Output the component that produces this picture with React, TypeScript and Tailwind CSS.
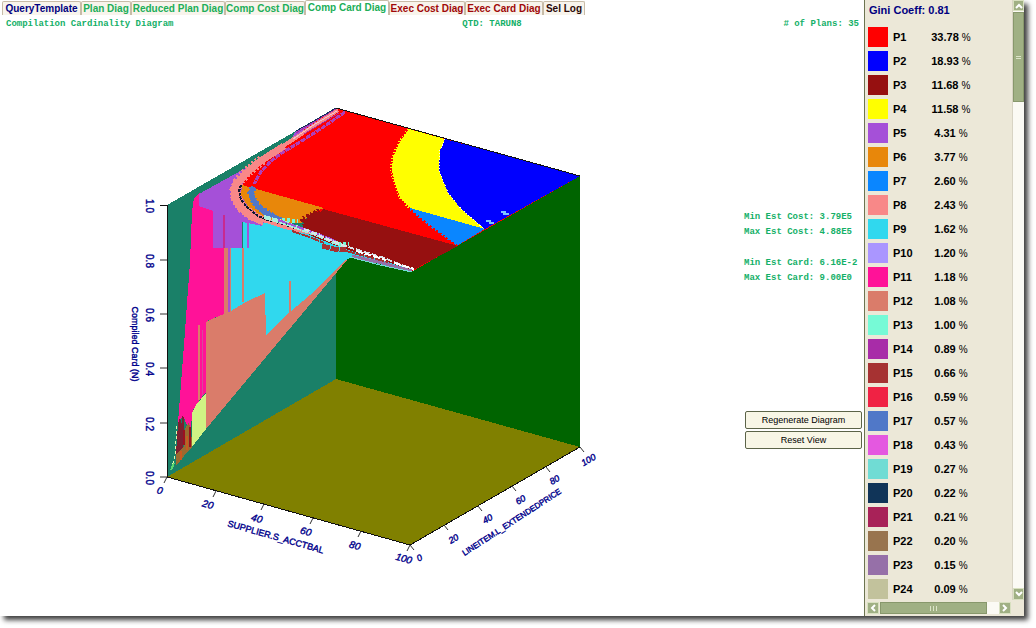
import { ReactNode } from "react";

type Plan = { name: string, value: string, color: string }
type Label = { text: string, x: number, y: number }

const tabs = [
    { title: 'QueryTemplate', style: 'w-[79px] text-[#000080]' },
    { title: 'Plan Diag', style: 'w-[50px] text-[#20ae58]' },
    { title: 'Reduced Plan Diag', style: 'w-[94px] text-[#20ae58]' },
    { title: 'Comp Cost Diag', style: 'w-[80px] text-[#20ae58]' },
    { title: 'Comp Card Diag', style: 'w-[84px] text-[#20ae58]', active: true },
    { title: 'Exec Cost Diag', style: 'w-[76px] text-[#a00808]' },
    { title: 'Exec Card Diag', style: 'w-[78px] text-[#a00808]' },
    { title: 'Sel Log', style: 'w-[42px] text-[#2a0808]' },
]

const plans: Plan[] = [
    { name: 'P1', value: '33.78', color: 'bg-[#ff0000]' },
    { name: 'P2', value: '18.93', color: 'bg-[#0000ff]' },
    { name: 'P3', value: '11.68', color: 'bg-[#961010]' },
    { name: 'P4', value: '11.58', color: 'bg-[#ffff00]' },
    { name: 'P5', value: '4.31', color: 'bg-[#a550d8]' },
    { name: 'P6', value: '3.77', color: 'bg-[#e8870a]' },
    { name: 'P7', value: '2.60', color: 'bg-[#0a86ff]' },
    { name: 'P8', value: '2.43', color: 'bg-[#f88888]' },
    { name: 'P9', value: '1.62', color: 'bg-[#30d8ee]' },
    { name: 'P10', value: '1.20', color: 'bg-[#aa96ff]' },
    { name: 'P11', value: '1.18', color: 'bg-[#ff1298]' },
    { name: 'P12', value: '1.08', color: 'bg-[#da7c6a]' },
    { name: 'P13', value: '1.00', color: 'bg-[#76fad6]' },
    { name: 'P14', value: '0.89', color: 'bg-[#a82ca8]' },
    { name: 'P15', value: '0.66', color: 'bg-[#a63232]' },
    { name: 'P16', value: '0.59', color: 'bg-[#f02244]' },
    { name: 'P17', value: '0.57', color: 'bg-[#5078c8]' },
    { name: 'P18', value: '0.43', color: 'bg-[#e458e0]' },
    { name: 'P19', value: '0.27', color: 'bg-[#70dcd4]' },
    { name: 'P20', value: '0.22', color: 'bg-[#103458]' },
    { name: 'P21', value: '0.21', color: 'bg-[#a82258]' },
    { name: 'P22', value: '0.20', color: 'bg-[#98744e]' },
    { name: 'P23', value: '0.15', color: 'bg-[#9670a8]' },
    { name: 'P24', value: '0.09', color: 'bg-[#c2c29c]' },
]

const heightLabels: Label[] = [
    { text: '1.0', x: 150, y: 206 },
    { text: '0.8', x: 150, y: 261 },
    { text: '0.6', x: 150, y: 315 },
    { text: '0.4', x: 150, y: 369 },
    { text: '0.2', x: 150, y: 424 },
    { text: '0.0', x: 150, y: 478 },
]

const supplierLabels: Label[] = [
    { text: '0', x: 160, y: 490 },
    { text: '20', x: 208, y: 504 },
    { text: '40', x: 257, y: 518 },
    { text: '60', x: 306, y: 531 },
    { text: '80', x: 355, y: 545 },
    { text: '100', x: 404, y: 558 },
]

const priceLabels: Label[] = [
    { text: '0', x: 419, y: 557 },
    { text: '20', x: 453, y: 538 },
    { text: '40', x: 487, y: 518 },
    { text: '60', x: 520, y: 499 },
    { text: '80', x: 554, y: 479 },
    { text: '100', x: 588, y: 459 },
]

function AxisLabels({ labels, angle, style }: { labels: Label[], angle: number, style: string }): ReactNode {
    return (
        <g className={style}>
            {labels.map((e) => (
                <text key={e.text} textAnchor="middle" transform={`translate(${e.x} ${e.y}) rotate(${angle})`} y={4}>{e.text}</text>
            ))}
        </g>
    )
}

function Surface(): ReactNode {
    return (
        <g shapeRendering="crispEdges" fill="none">
            {/* steep side of the surface */}
            <path fill="#ff1298" d="M199 193 L194 198 L192 212 L190 262 L184 345 L178 423 L183 416 L190 432 L193 410 L199 401 L206 392 L207 321 L224 314 L228 200 Z" />
            <path fill="#da7c6a" d="M206 322 L212 319 L224 314 L224 248 L244 248 L266 290 L290 310 L352 254 L206 429 Z" />
            <path fill="#30d8ee" d="M231 248 L243 248 L243 220 L262 219 L300 228 L345 246 L413 270 L410 272 L352 257 L344 261 L316 290 L290 312 L266 335 L265 293 L246 302 L231 311 Z" />
            <path fill="#a550d8" d="M336 108 L296 131 L291 139 L260 160 L199 194 L199 206 L213 211 L213 248 L242 248 L242 222 L262 226 L300 140 Z" />
            <path stroke="#a550d8" strokeWidth="2" d="M229 248 V312 M248 220 V248" />
            <path stroke="#da7c6a" strokeWidth="2" d="M243 248 V302 M290 281 V312 M199 325 V400" />
            <path stroke="#c82a90" strokeWidth="2" d="M224 215 V248" />
            <path stroke="#d84a98" strokeWidth="1" d="M202 330 V396" />
            <path fill="#d0f484" d="M192 413 L196 405 L201 399 L206 393 V429 L192 447 Z" />
            <path fill="#7c2030" d="M178 424 L180 418 L182 424 L183 408 L184 426 L183 449 L176 454 Z" />
            <path fill="#9a6a30" d="M176 454 L184 447 L184 431 L189 422 L192 440 V447 L184 456 L176 466 Z" />
            <path stroke="#9c1020" strokeWidth="2" d="M190 427 V447 M184 430 V445" />
            <path stroke="#c85a20" strokeWidth="2" d="M181 451 V460 M187 436 V450" />
            <path stroke="#e8f8b0" strokeDasharray="3 2" d="M177 426 L175 456 L171 470" />
            <path stroke="#5ad870" strokeWidth="2" d="M174 463 L171 470" />

            {/* plateau */}
            <path fill="#ff0000" d="M336 108 L580 176 L413 271 L242 186 L250 171 L270 153 Z" />
            <path fill="#0000ff" d="M445 139 L580 176 L485 229 L462 210 L448 193 L439 170 L440 150 Z" />
            <path fill="#ffff00" d="M409 129 L445 139 L440 150 L439 170 L448 193 L462 210 L485 229 L410 208 L400 197 L395 183 L392 170 L393 157 L400 142 Z" />
            <path stroke="#ffff00" strokeWidth="2" strokeDasharray="1 2" d="M408 129 L399 142 L392 157 L391 170 L394 183 L399 197 L409 208" />
            <path stroke="#ffffff" strokeDasharray="1 2" d="M445 139 L440 150 L439 170 L448 193 L462 210 L483 228" />
            <path fill="#0a86ff" d="M410 208 L485 229 L458 245 L430 225 Z" />
            <path stroke="#0a86ff" strokeWidth="2" strokeDasharray="2 2" d="M410 209 L430 226 L457 245" />
            <path fill="#e8870a" d="M242 185 L324 208 L310 214 L301 223 L280 223 L262 217 L248 207 L241 195 Z" />
            <path fill="#961010" d="M323 209 L320 212 L313 211 L312 215 L306 214 L307 219 L299 219 L304 224 L301 230 L314 237 L345 249 L413 270 L458 246 Z" />
            <path stroke="#961010" strokeWidth="4" strokeDasharray="2 2" d="M319 210 L302 219 L306 228" />

            {/* bands that follow the hyperbolic edge */}
            <path stroke="#f88888" strokeWidth="9" d="M238 182 L235 190 L236 198 L241 207 L252 216 L264 221" />
            <path stroke="#f88888" strokeWidth="4" d="M338 110 L300 135 L280 148" />
            <path stroke="#f88888" strokeWidth="7" d="M284 146 L262 160 L248 171 L238 183" />
            <path stroke="#f88888" strokeWidth="4" d="M260 219 L285 227 L312 233" />
            <path stroke="#f88888" strokeWidth="11" strokeDasharray="2 2" d="M262 160 L247 172 L238 182 L235 190 L236 198 L241 207 L254 217" />
            <path stroke="#101830" strokeWidth="2" strokeDasharray="3 1" d="M241 185 L239 191 L241 200 L248 208 L258 216 L270 221" />
            <path stroke="#101830" strokeDasharray="2 4" d="M270 221 L300 230" />
            <path stroke="#b040b8" strokeWidth="3" strokeDasharray="5 1" d="M345 112 L322 128 L300 142 L282 153 L270 162 L260 173 L254 184" />
            <path stroke="#5078c8" strokeWidth="5" d="M254 187 L251 192 L252 198 L258 207 L268 214 L281 220" />
            <path stroke="#5078c8" strokeWidth="7" strokeDasharray="2 2" d="M253 188 L251 193 L253 199 L259 208 L274 217" />
            <path stroke="#a82ca8" strokeWidth="1" d="M336 109 L312 123 L296 133 M339 113 L304 134" />
            <path stroke="#f0c0d0" strokeWidth="1" d="M337 111 L312 126 L293 139" />
            <path stroke="#103458" strokeWidth="1" d="M336 108 L312 122 L296 131" />

            {/* noise along the near edge */}
            <path stroke="#a8f0dc" strokeWidth="4" strokeDasharray="7 1" d="M264 217 L282 222 L318 235 L343 246" />
            <path stroke="#76fad6" strokeWidth="4" strokeDasharray="3 2" d="M282 220 L298 221 M338 244 L349 244" />
            <path stroke="#a550d8" strokeWidth="2" strokeDasharray="9 1" d="M278 220 L304 229 L336 241" />
            <path stroke="#dce4ea" strokeWidth="2" strokeDasharray="6 2" d="M304 229 L342 245 L384 258 L414 270" />
            <path stroke="#a63232" strokeWidth="5" strokeDasharray="8 1" d="M322 246 L334 249 L346 250" />
            <path stroke="#a63232" strokeWidth="2" strokeDasharray="9 1" d="M292 231 L312 238 L324 243 M346 251 L388 262" />
            <path stroke="#9670a8" strokeWidth="3" d="M352 256 L382 263 L412 271" />
            <path stroke="#70dcd4" strokeWidth="1" d="M350 257 L380 265 L412 272" />
            <path stroke="#ffffff" strokeWidth="2" strokeDasharray="7 2" d="M356 251 L386 260 M394 263 L414 269" />
            <path stroke="#80c4ff" strokeWidth="2" d="M486 221 H491 M489 223 H494 M501 212 H506 M503 214 H509" />
        </g>
    )
}

function CostDiagram(): ReactNode {
    return (
        <svg viewBox="0 30 740 586" preserveAspectRatio="xMinYMin meet" className="h-full w-full" role="img" aria-label="Compilation Cardinality Diagram">
            <g shapeRendering="crispEdges">
                <path fill="#1a8068" d="M167 205 L336 108 V379 L167 477 Z" />
                <path fill="#006400" d="M336 108 L580 176 V447 L336 379 Z" />
                <path fill="#808000" d="M167 477 L336 379 L580 447 L410 545 Z" />
            </g>
            <Surface />
            <path fill="none" stroke="#101010" shapeRendering="crispEdges" d="M336 108 L580 176 M160 205 H167 V477 L410 545 L580 447" />
            <path fill="none" stroke="#303030" d="M160 260 H167 M160 314 H167 M160 368 H167 M160 423 H167 M160 477 H167 M167 477 L164 483 M216 491 L213 497 M264 504 L261 510 M313 518 L310 524 M361 531 L358 537 M410 545 L407 551 M410 545 L414 550 M444 525 L448 530 M478 506 L482 511 M512 486 L516 491 M546 467 L550 472 M580 447 L584 452" />
            <g className="fill-[#00008b] stroke-[#00008b] font-['Liberation_Sans',Arial,sans-serif]" strokeWidth={0.4}>
                <AxisLabels labels={heightLabels} angle={90} style="text-[10px]" />
                <AxisLabels labels={supplierLabels} angle={16} style="text-[10px] italic" />
                <AxisLabels labels={priceLabels} angle={-30} style="text-[9px] italic" />
                <AxisLabels labels={[{ text: 'Compiled Card (N)', x: 136, y: 344 }]} angle={90} style="text-[9px]" />
                <AxisLabels labels={[{ text: 'SUPPLIER.S_ACCTBAL', x: 276, y: 536 }]} angle={16} style="text-[9px]" />
                <AxisLabels labels={[{ text: 'LINEITEM.L_EXTENDEDPRICE', x: 511, y: 521 }]} angle={-33} style="text-[8px]" />
            </g>
        </svg>
    )
}

function ScrollButton({ name, icon, style }: { name: string, icon: string, style: string }): ReactNode {
    return (
        <button type="button" aria-label={name} className={`flex shrink-0 items-center justify-center border border-[#d8e0c0] bg-[#a0b084] ${style}`}>
            <svg viewBox="0 0 8 8" className="h-2 w-2" fill="none" stroke="#ffffff" strokeWidth="2"><path d={icon} /></svg>
        </button>
    )
}

function Legend(): ReactNode {
    return (
        <aside className="flex w-[160px] shrink-0 flex-col border-l border-[#6c7450] bg-[#ece8d8]">
            <div className="flex min-h-0 flex-1">
                <div className="min-w-0 flex-1 overflow-hidden pl-[3px]">
                    <h2 className="h-[25px] pt-[3px] pl-px text-[11px] leading-[14px] font-bold text-[#000080]">Gini Coeff: 0.81</h2>
                    <table className="w-[124px] table-fixed border-collapse text-[11px] leading-4 font-bold text-black">
                        <tbody>
                            {plans.map((plan) => (
                                <tr key={plan.name} className="h-6">
                                    <td className="w-[25px] p-0"><div className={`h-5 w-5 ${plan.color}`} /></td>
                                    <td className="w-[17px] p-0 whitespace-nowrap">{plan.name}</td>
                                    <td className="p-0 text-center">{plan.value} <span className="text-[10px] font-normal">%</span></td>
                                </tr>
                            ))}
                        </tbody>
                    </table>
                </div>
                <div className="flex w-[12px] shrink-0 flex-col border-l border-[#d8d4c4] bg-[#fbfaf4]">
                    <ScrollButton name="Scroll up" icon="M1 6 L4 3 L7 6" style="h-[11px] w-full" />
                    <div className="mt-px flex h-[90px] flex-col items-center justify-center gap-px border border-[#88986c] bg-[#a0b084]">
                        <span className="h-px w-[5px] bg-[#dce4c8]" />
                        <span className="h-px w-[5px] bg-[#dce4c8]" />
                    </div>
                    <div className="flex-1" />
                    <ScrollButton name="Scroll down" icon="M1 2 L4 5 L7 2" style="h-[12px] w-full" />
                </div>
            </div>
            <div className="flex h-[16px] shrink-0 items-center pr-[13px] pl-[2px]">
                <ScrollButton name="Scroll left" icon="M6 1 L3 4 L6 7" style="h-3 w-3" />
                <div className="ml-px flex h-3 w-[107px] items-center justify-center gap-[2px] border border-[#88986c] bg-[#a0b084]">
                    <span className="h-[5px] w-px bg-[#dce4c8]" />
                    <span className="h-[5px] w-px bg-[#dce4c8]" />
                    <span className="h-[5px] w-px bg-[#dce4c8]" />
                </div>
                <div className="h-3 flex-1 bg-[#fbfaf4]" />
                <ScrollButton name="Scroll right" icon="M2 1 L5 4 L2 7" style="h-3 w-3" />
            </div>
        </aside>
    )
}

export default function App(): ReactNode {
    return (
        <div className="h-screen overflow-hidden bg-white pr-3 pb-3 font-['Liberation_Sans',Arial,sans-serif]">
            <div className="flex h-full bg-white shadow-[4px_4px_5px_0px_#404040]">
                <main className="flex min-w-0 flex-1 flex-col">
                    <nav className="flex h-[15px] shrink-0 items-end pl-[2px]">
                        {tabs.map((tab) => (
                            <button key={tab.title} type="button" className={`shrink-0 rounded-t-xs border-x border-t border-[#c8bca8] text-center text-[10px] font-bold whitespace-nowrap ${tab.active ? 'h-[15px] bg-white leading-[12px]' : 'h-[14px] bg-[#f8f4ec] leading-[14px]'} ${tab.style}`}>{tab.title}</button>
                        ))}
                    </nav>
                    <header className="grid h-[15px] shrink-0 grid-cols-3 items-center pr-[5px] pl-[6px] pt-[3px] font-['Liberation_Mono',monospace] text-[9px] leading-3 font-bold text-[#14b068]">
                        <h1>Compilation Cardinality Diagram</h1>
                        <p className="pl-[172px]">QTD: TARUN8</p>
                        <p className="text-right"># of Plans: 35</p>
                    </header>
                    <div className="flex min-h-0 flex-1">
                        <div className="min-w-0 flex-1"><CostDiagram /></div>
                        <section className="flex w-[124px] shrink-0 flex-col pt-[180px] pr-[2px] pl-1">
                            <div className="font-['Liberation_Mono',monospace] text-[9px] leading-[15px] font-bold whitespace-nowrap text-[#14b068]">
                                <p>Min Est Cost: 3.79E5</p>
                                <p>Max Est Cost: 4.88E5</p>
                                <p className="mt-4">Min Est Card: 6.16E-2</p>
                                <p>Max Est Card: 9.00E0</p>
                            </div>
                            <div className="mt-[125px] flex flex-col gap-[2px] pl-px">
                                <button type="button" className="h-[18px] rounded-xs border border-[#5c6448] bg-[#f8f6e6] text-[9px] leading-4 text-black">Regenerate Diagram</button>
                                <button type="button" className="h-[18px] rounded-xs border border-[#5c6448] bg-[#f8f6e6] text-[9px] leading-4 text-black">Reset View</button>
                            </div>
                        </section>
                    </div>
                </main>
                <Legend />
            </div>
        </div>
    );
}
